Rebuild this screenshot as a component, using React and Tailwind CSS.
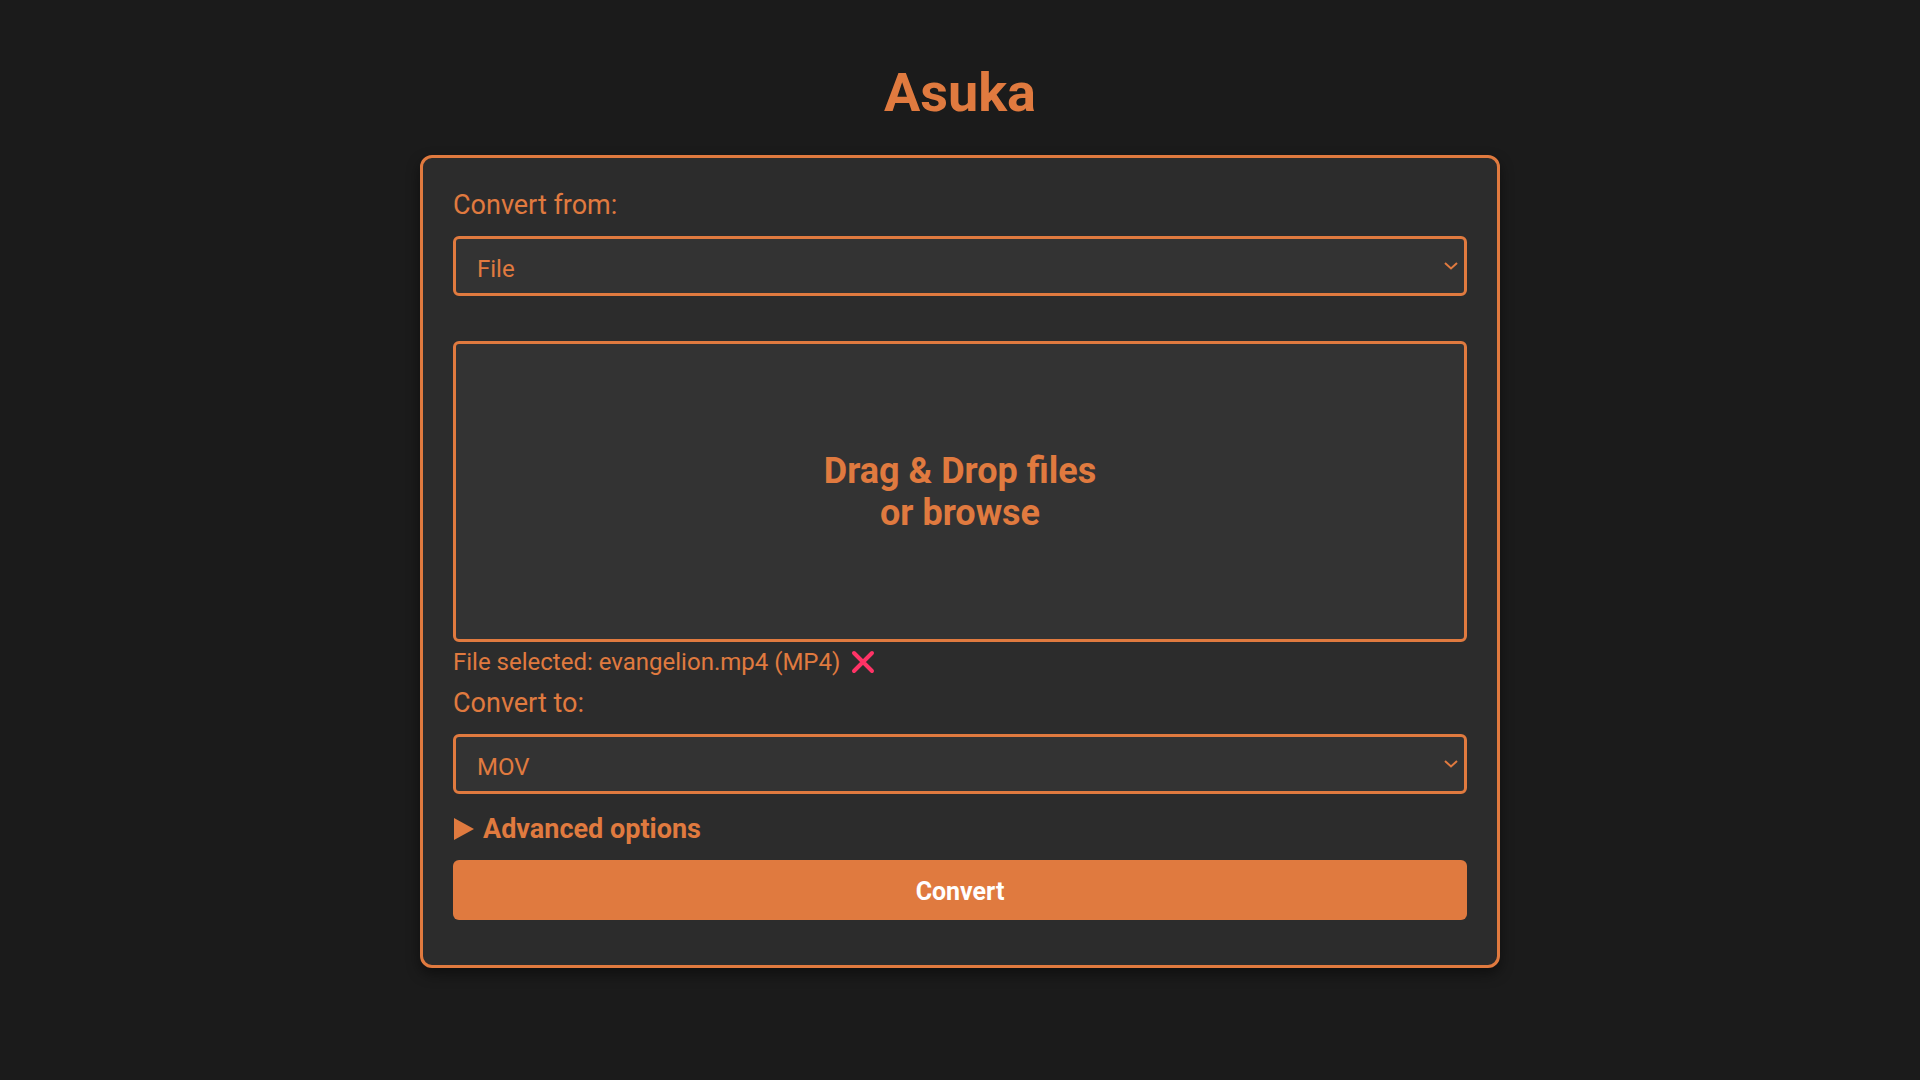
import React, { useState } from 'react';

const ORANGE = '#e07a3f';

const Chevron = () => (
  <svg
    className="pointer-events-none absolute right-[9px] top-1/2 -translate-y-1/2"
    width="14"
    height="8"
    viewBox="0 0 14 8"
    fill="none"
  >
    <path d="M1 1l6 5.5L13 1" stroke={ORANGE} strokeWidth="2" />
  </svg>
);

const FormatSelect = ({ value, options, onChange }) => (
  <div className="relative">
    <select
      value={value}
      onChange={(e) => onChange(e.target.value)}
      className="block w-full h-[60px] appearance-none rounded-[6px] border-[3px] border-[#e07a3f] bg-[#333333] pl-[21px] pr-[40px] pt-[6px] text-[24px] text-[#e07a3f] outline-none font-['Roboto',sans-serif]"
    >
      {options.map((o) => (
        <option key={o} value={o}>
          {o}
        </option>
      ))}
    </select>
    <Chevron />
  </div>
);

const App = () => {
  const [source, setSource] = useState('File');
  const [target, setTarget] = useState('MOV');
  const [file, setFile] = useState({ name: 'evangelion.mp4', type: 'MP4' });

  return (
    <div className="min-h-screen bg-[#1b1b1b] pt-[61px] pb-[40px] font-['Roboto',sans-serif] text-[#e07a3f]">
      <h1 className="text-center text-[54px] leading-[63px] font-bold mb-[31px]">Asuka</h1>

      <div className="mx-auto w-[1080px] rounded-[12px] border-[3px] border-[#e07a3f] bg-[#2c2c2c] px-[30px] pt-[31px] pb-[45px] shadow-[0_6px_14px_rgba(0,0,0,0.45)]">
        {/* Source */}
        <label className="block text-[27px] leading-[32px] mb-[15px]">Convert from:</label>
        <FormatSelect value={source} options={['File', 'URL']} onChange={setSource} />

        {/* Drop zone */}
        <div className="mt-[45px] h-[301px] rounded-[6px] border-[3px] border-[#e07a3f] bg-[#333333] flex items-center justify-center">
          <p className="text-center text-[36px] leading-[42px] font-bold">
            Drag &amp; Drop files
            <br />
            or browse
          </p>
        </div>

        {file && (
          <div className="mt-[6px] flex items-center text-[24px] leading-[28px]">
            <span>
              File selected: {file.name} ({file.type})
            </span>
            <button onClick={() => setFile(null)} className="ml-[11px] flex items-center">
              <svg width="24" height="24" viewBox="0 0 24 24" fill="none">
                <path d="M3 3l18 18M21 3L3 21" stroke="#ff3366" strokeWidth="4" strokeLinecap="round" />
              </svg>
            </button>
          </div>
        )}

        {/* Target */}
        <label className="block mt-[11px] text-[27px] leading-[32px] mb-[15px]">Convert to:</label>
        <FormatSelect value={target} options={['MOV', 'MP4', 'AVI', 'MKV', 'WEBM']} onChange={setTarget} />

        <div className="mt-[19px] flex items-center h-[32px] text-[27px] font-bold cursor-pointer">
          <svg width="20" height="22" viewBox="0 0 20 22" className="mr-[9px] ml-[1px]">
            <path d="M0 0L20 11L0 22Z" fill={ORANGE} />
          </svg>
          Advanced options
        </div>

        <button className="mt-[15px] w-full h-[60px] rounded-[6px] bg-[#e07a3f] pt-[4px] text-white text-[25px] font-bold">
          Convert
        </button>
      </div>
    </div>
  );
};

export default App;
